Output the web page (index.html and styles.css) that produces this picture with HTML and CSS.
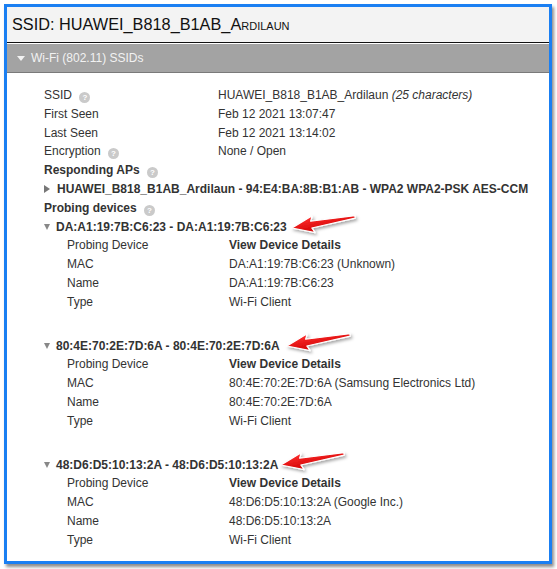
FILE: index.html
```html
<!DOCTYPE html>
<html>
<head>
<meta charset="utf-8">
<link rel="stylesheet" href="styles.css">
</head>
<body>
<div class="frame">
  <div class="title">SSID: HUAWEI_B818_B1AB_<span class="sc">Ardilaun</span></div>
  <div class="section-bar"><span class="tri-white"></span>Wi-Fi (802.11) SSIDs</div>
  <div class="content">
    <div class="kv">
      <span class="k">SSID <i class="help">?</i></span><span class="v">HUAWEI_B818_B1AB_Ardilaun <em>(25 characters)</em></span>
      <span class="k">First Seen</span><span class="v">Feb 12 2021 13:07:47</span>
      <span class="k">Last Seen</span><span class="v">Feb 12 2021 13:14:02</span>
      <span class="k">Encryption <i class="help">?</i></span><span class="v">None / Open</span>
    </div>
    <div class="heading">Responding APs <i class="help">?</i></div>
    <div class="toggle"><span class="tri-right"></span>HUAWEI_B818_B1AB_Ardilaun - 94:E4:BA:8B:B1:AB - WPA2 WPA2-PSK AES-CCM</div>
    <div class="heading">Probing devices <i class="help">?</i></div>

    <div class="device">
      <div class="toggle"><span class="tri-down"></span>DA:A1:19:7B:C6:23 - DA:A1:19:7B:C6:23</div>
      <div class="kv sub">
        <span class="k">Probing Device</span><span class="v link">View Device Details</span>
        <span class="k">MAC</span><span class="v">DA:A1:19:7B:C6:23 (Unknown)</span>
        <span class="k">Name</span><span class="v">DA:A1:19:7B:C6:23</span>
        <span class="k">Type</span><span class="v">Wi-Fi Client</span>
      </div>
    </div>

    <div class="device">
      <div class="toggle"><span class="tri-down"></span>80:4E:70:2E:7D:6A - 80:4E:70:2E:7D:6A</div>
      <div class="kv sub">
        <span class="k">Probing Device</span><span class="v link">View Device Details</span>
        <span class="k">MAC</span><span class="v">80:4E:70:2E:7D:6A (Samsung Electronics Ltd)</span>
        <span class="k">Name</span><span class="v">80:4E:70:2E:7D:6A</span>
        <span class="k">Type</span><span class="v">Wi-Fi Client</span>
      </div>
    </div>

    <div class="device">
      <div class="toggle"><span class="tri-down"></span>48:D6:D5:10:13:2A - 48:D6:D5:10:13:2A</div>
      <div class="kv sub">
        <span class="k">Probing Device</span><span class="v link">View Device Details</span>
        <span class="k">MAC</span><span class="v">48:D6:D5:10:13:2A (Google Inc.)</span>
        <span class="k">Name</span><span class="v">48:D6:D5:10:13:2A</span>
        <span class="k">Type</span><span class="v">Wi-Fi Client</span>
      </div>
    </div>
  </div>
</div>

<svg class="arrows" width="557" height="569" viewBox="0 0 557 569" xmlns="http://www.w3.org/2000/svg">
  <defs>
    <linearGradient id="rg" x1="0" y1="0" x2="0" y2="1">
      <stop offset="0" stop-color="#ff3030"/>
      <stop offset="1" stop-color="#d00000"/>
    </linearGradient>
    <filter id="sh" x="-20%" y="-50%" width="140%" height="220%">
      <feDropShadow dx="1.5" dy="2" stdDeviation="1.5" flood-color="#000" flood-opacity="0.35"/>
    </filter>
    <path id="arr" d="M0 0 L22 -8.5 L19.5 -3.4 L64 -1.2 L64 1.2 L19.5 3.4 L22 8.5 Z"/>
  </defs>
  <g filter="url(#sh)" fill="url(#rg)" stroke="#fff" stroke-width="1.2" stroke-linejoin="round">
    <use href="#arr" transform="translate(292 228) rotate(-10)"/>
    <use href="#arr" transform="translate(287 346) rotate(-10)"/>
    <use href="#arr" transform="translate(281 465) rotate(-10)"/>
  </g>
</svg>
</body>
</html>
```

FILE: styles.css
```css
html, body {
  margin: 0;
  padding: 0;
  background: #fff;
}

body {
  position: relative;
  width: 557px;
  height: 569px;
  font-family: "Liberation Sans", Arial, sans-serif;
  font-size: 12px;
  color: #333;
}

.frame {
  position: relative;
  margin: 4px 0 0 4px;
  width: 542px;
  height: 554px;
  border: 3px solid #1a7ff2;
  box-shadow: 2px 3px 3px rgba(0, 0, 0, 0.45);
  background: #fff;
  overflow: hidden;
}

.title {
  height: 35px;
  line-height: 34px;
  background: #f3f3f3;
  padding-left: 5px;
  font-size: 16.3px;
  color: #111;
  border-bottom: 1px solid #111;
}

.sc {
  font-variant: small-caps;
}

.section-bar {
  margin-top: 1px;
  height: 28px;
  background: #a3a3a3;
  border-bottom: 1px solid #7a7a7a;
  display: flex;
  align-items: center;
  padding-left: 10px;
  color: #f2f2f2;
  font-size: 12px;
}

.tri-white {
  width: 0;
  height: 0;
  border-left: 4px solid transparent;
  border-right: 4px solid transparent;
  border-top: 5px solid #f2f2f2;
  margin-right: 6px;
}

.content {
  padding: 13px 0 0 37px;
  line-height: 18.8px;
}

.kv {
  display: grid;
  grid-template-columns: 174px 1fr;
}

.kv.sub {
  padding-left: 23px;
  grid-template-columns: 162px 1fr;
}

.v em {
  font-style: italic;
}

.link {
  font-weight: bold;
}

.heading {
  font-weight: bold;
}

.toggle {
  font-weight: bold;
  display: flex;
  align-items: center;
}

.tri-right {
  width: 0;
  height: 0;
  border-top: 4px solid transparent;
  border-bottom: 4px solid transparent;
  border-left: 6px solid #777;
  margin-right: 7px;
}

.tri-down {
  width: 0;
  height: 0;
  border-left: 3.5px solid transparent;
  border-right: 3.5px solid transparent;
  border-top: 6px solid #888;
  margin-right: 6px;
}

.device {
  margin-bottom: 25px;
}

.help {
  display: inline-block;
  width: 11px;
  height: 11px;
  border-radius: 50%;
  background: #cacaca;
  color: #fff;
  font-style: normal;
  font-weight: bold;
  font-size: 8px;
  line-height: 11px;
  text-align: center;
  vertical-align: -1px;
  margin-left: 4px;
}

.arrows {
  position: absolute;
  left: 0;
  top: 0;
  pointer-events: none;
}
```
